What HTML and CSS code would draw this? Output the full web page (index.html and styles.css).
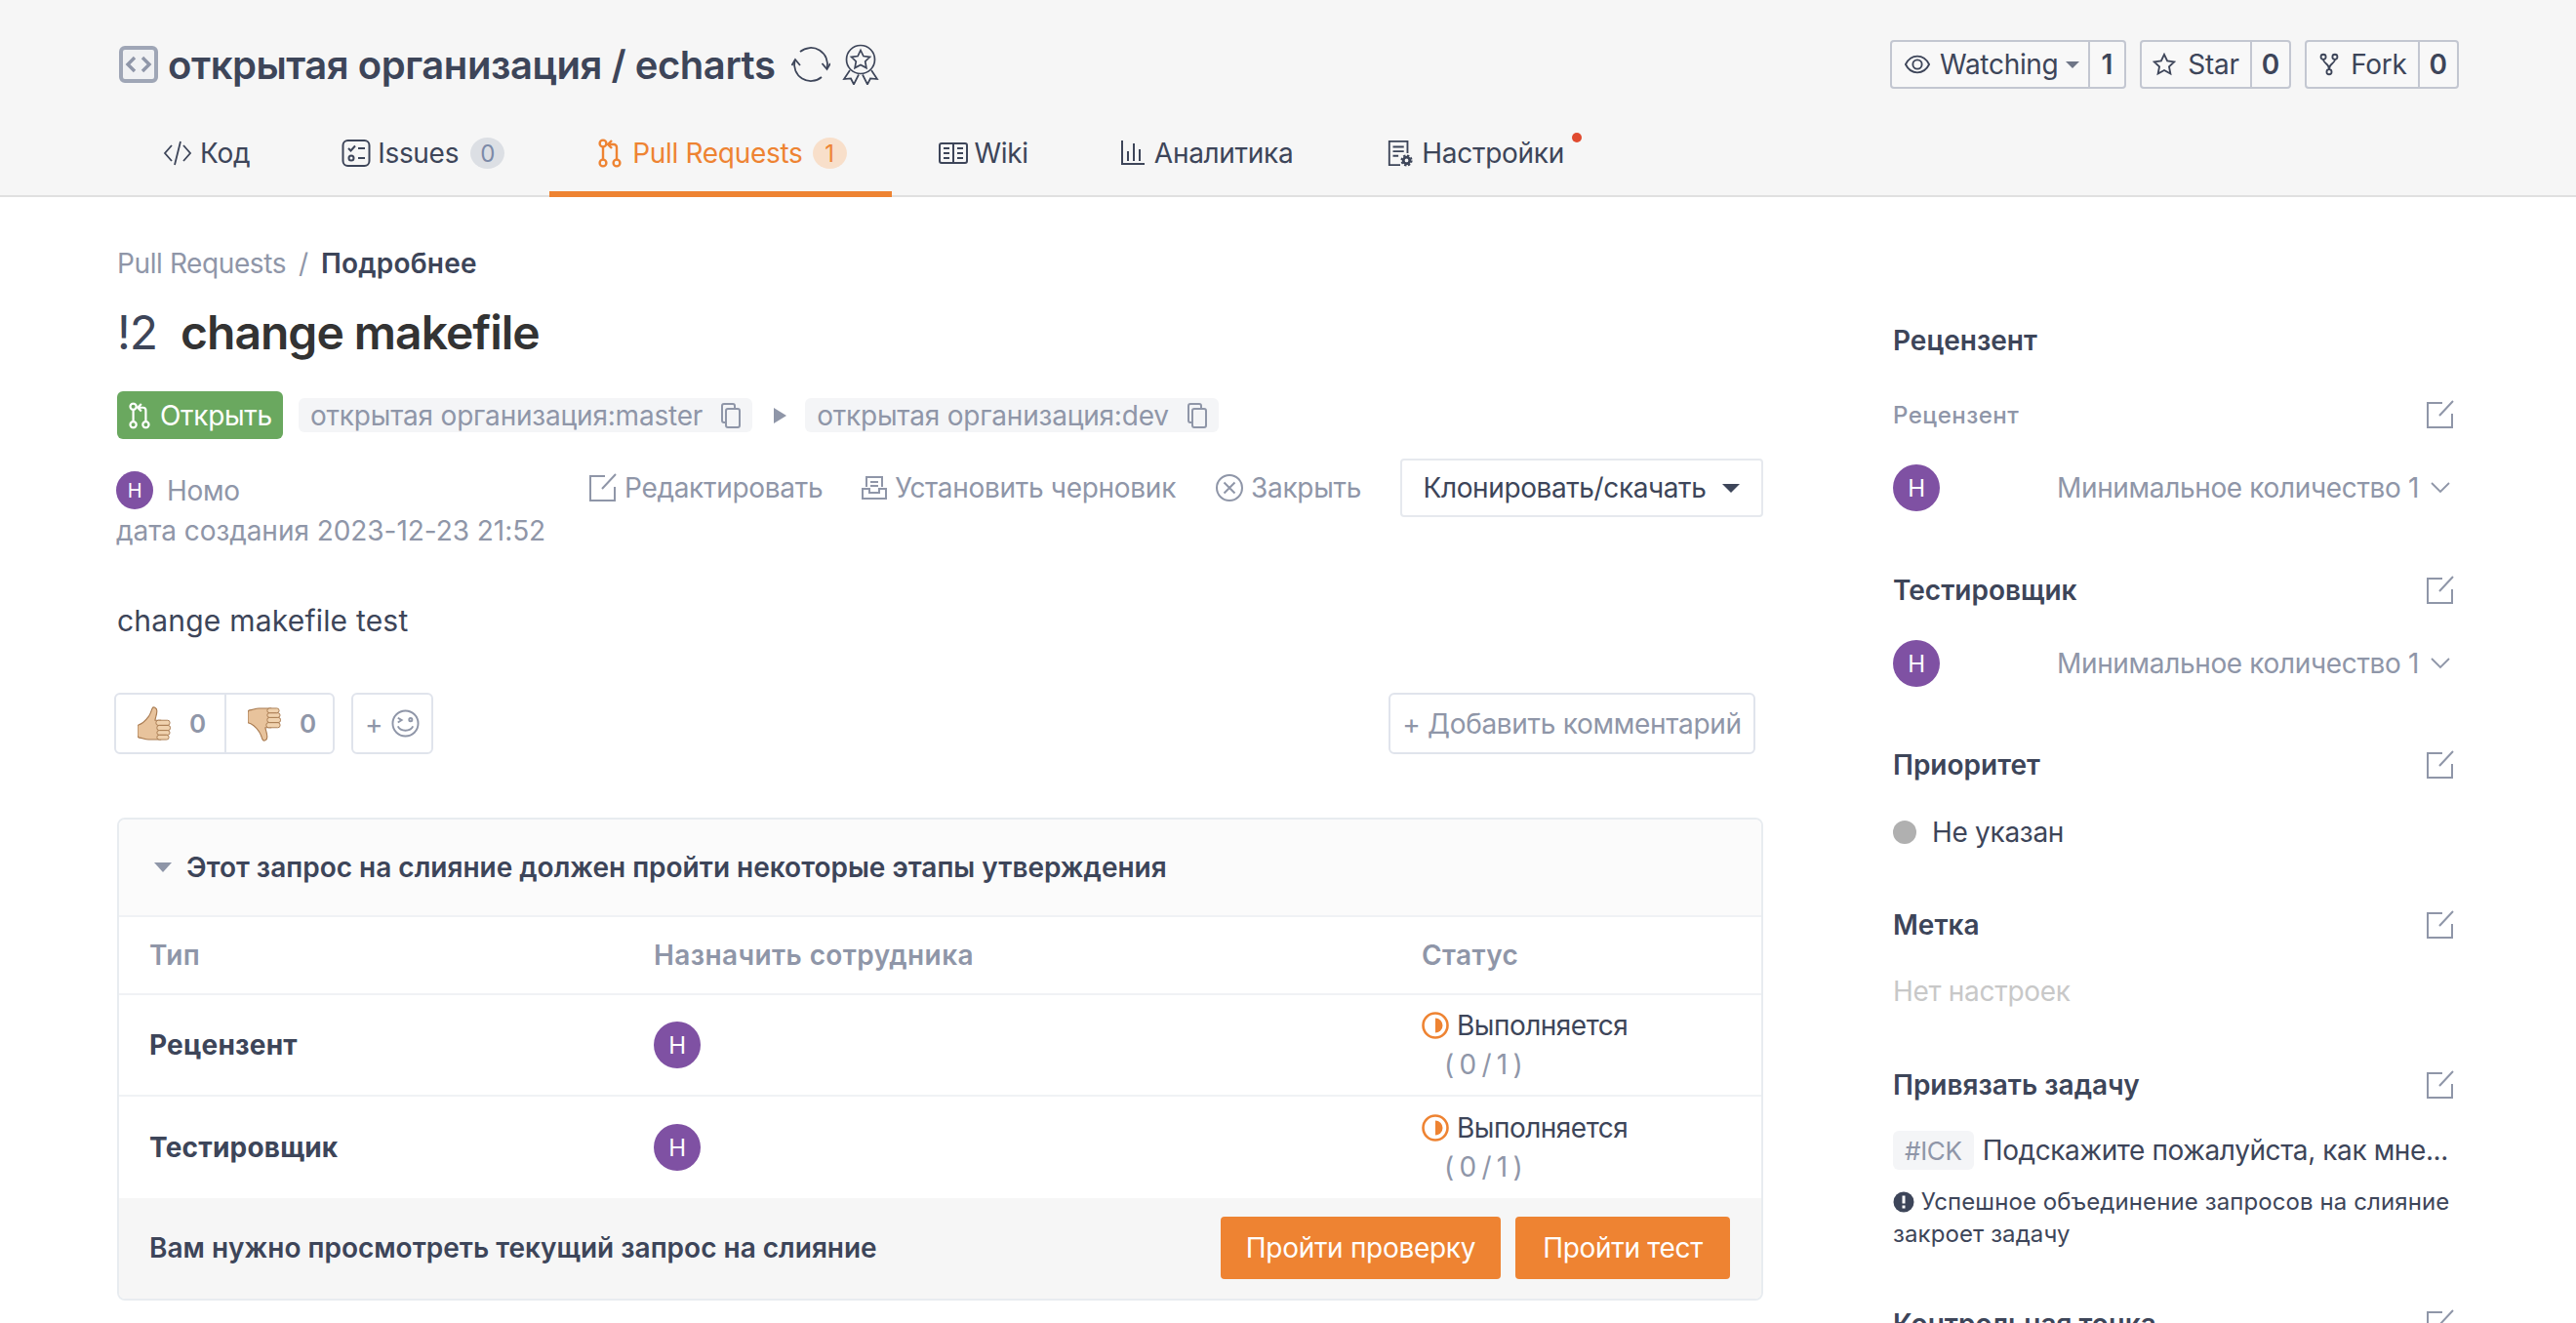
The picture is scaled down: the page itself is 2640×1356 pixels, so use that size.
FILE: index.html
```html
<!DOCTYPE html>
<html lang="ru">
<head>
  <meta charset="UTF-8">
  <title>change makefile</title>
  <link rel="stylesheet" href="styles.css">
</head>
<body>
  <svg class="defs" width="0" height="0">
    <symbol id="i-edit" viewBox="0 0 30 30">
      <path d="M17 3H2v25h25V14M14 16L28 1" fill="none" stroke="currentColor" stroke-width="2"/>
    </symbol>
    <symbol id="i-copy" viewBox="0 0 20 26">
      <rect x="5" y="6" width="14" height="19" rx="2" fill="none" stroke="currentColor" stroke-width="2"/>
      <path d="M5 20H3a2 2 0 0 1-2-2V3a2 2 0 0 1 2-2h9a2 2 0 0 1 2 2v3" fill="none" stroke="currentColor" stroke-width="2"/>
    </symbol>
    <symbol id="i-pr" viewBox="0 0 24 30">
      <g fill="none" stroke="currentColor" stroke-width="2.4">
        <circle cx="5" cy="5" r="3.4"/><circle cx="5" cy="25" r="3.4"/><circle cx="19" cy="25" r="3.4"/>
        <path d="M5 9v12M19 21V9a3 3 0 0 0-3-3h-5M14 2l-4 4 4 4"/>
      </g>
    </symbol>
    <symbol id="i-progress" viewBox="0 0 28 28">
      <circle cx="14" cy="14" r="12.5" fill="none" stroke="currentColor" stroke-width="2.6"/>
      <path d="M14 6.5a7.5 7.5 0 0 1 0 15z" fill="currentColor"/>
    </symbol>
    <symbol id="i-chevron" viewBox="0 0 20 12">
      <path d="M1 1l9 9 9-9" fill="none" stroke="currentColor" stroke-width="1.8"/>
    </symbol>
    <symbol id="i-thumb" viewBox="0 0 36 38">
      <path d="M1 20c4-1 8-5 11-9 2-3 3-6 4-9 1-2 5-1 5 3 0 4-2 8-2 10h6v21H12c-4 0-7-2-10-2-1 0-2-1-2-3v-9c0-1 0-2 1-2z" fill="#e8c39c" stroke="#a87a50" stroke-width="1.2"/>
      <rect x="20" y="15" width="15" height="5.5" rx="2.5" fill="#f0d2ae" stroke="#a87a50"/>
      <rect x="21" y="20.5" width="14.5" height="5.5" rx="2.5" fill="#f0d2ae" stroke="#a87a50"/>
      <rect x="21" y="26" width="14" height="5" rx="2.5" fill="#f0d2ae" stroke="#a87a50"/>
      <rect x="21" y="31" width="13" height="5" rx="2.5" fill="#f0d2ae" stroke="#a87a50"/>
    </symbol>
  </svg>

  <header class="repo-header">
    <div class="repo-top">
      <div class="repo-name">
        <svg class="repo-icon" viewBox="0 0 40 38"><rect x="2" y="2" width="36" height="34" rx="4" fill="#f0f1f3" stroke="#9fa6b6" stroke-width="4"/><path d="M16 12l-7 7 7 7M24 12l7 7-7 7" fill="none" stroke="#8f96a8" stroke-width="3.4"/></svg>
        <span>открытая организация / echarts</span>
        <svg class="sync-icon" viewBox="0 0 40 40"><g fill="none" stroke="#3d4559" stroke-width="1.800"><path d="M9 7A17 17 0 0 1 36.500 24"/><path d="M31.500 19l5 6 3.500-6"/><path d="M31 33A17 17 0 0 1 3.500 16"/><path d="M.5 21l3.500-6 5 6"/></g></svg>
        <svg class="medal-icon" viewBox="0 0 38 42"><g fill="none" stroke="#3d4559" stroke-width="1.7"><circle cx="19" cy="16" r="14.500"/><path d="M19 6.500l2.900 6 6.600.9-4.800 4.600 1.200 6.600-5.900-3.100-5.900 3.100 1.200-6.600-4.800-4.600 6.600-.9z"/><path d="M8 27L2 36l7-.5 3 6 5-10M30 27l6 9-7-.5-3 6-5-10"/></g></svg>
      </div>
      <div class="repo-actions">
        <div class="count-btn count-watch">
          <span class="count-label">
            <svg class="btn-icon" viewBox="0 0 28 22"><g fill="none" stroke="#3d4559" stroke-width="2"><path d="M1 11c3-6 8-9 13-9s10 3 13 9c-3 6-8 9-13 9S4 17 1 11z"/><circle cx="14" cy="11" r="5"/></g></svg>
            Watching<i class="caret"></i>
          </span>
          <b class="count-num">1</b>
        </div>
        <div class="count-btn count-star">
          <span class="count-label">
            <svg class="btn-icon btn-icon-star" viewBox="0 0 26 26"><path d="M13 2l3.400 7.200 7.600 1-5.600 5.300 1.500 7.800-6.900-3.800-6.900 3.800 1.500-7.800L2 10.200l7.600-1z" fill="none" stroke="#3d4559" stroke-width="2"/></svg>
            Star
          </span>
          <b class="count-num">0</b>
        </div>
        <div class="count-btn">
          <span class="count-label">
            <svg class="btn-icon btn-icon-fork" viewBox="0 0 22 26"><g fill="none" stroke="#3d4559" stroke-width="2"><circle cx="4.500" cy="4.500" r="2.800"/><circle cx="17.500" cy="4.500" r="2.800"/><circle cx="11" cy="21.500" r="2.800"/><path d="M4.500 7.500c0 5 6.500 4 6.500 11M17.500 7.500c0 5-6.500 4-6.500 11"/></g></svg>
            Fork
          </span>
          <b class="count-num">0</b>
        </div>
      </div>
    </div>
    <nav class="tabs">
      <a class="tab tab-code">
        <svg class="tab-icon tab-icon-code" viewBox="0 0 30 30"><path d="M9 7l-7 8 7 8M21 7l7 8-7 8M18 3l-6 24" fill="none" stroke="currentColor" stroke-width="1.800"/></svg>
        Код
      </a>
      <a class="tab tab-issues">
        <svg class="tab-icon" viewBox="0 0 30 30"><g fill="none" stroke="currentColor" stroke-width="2"><rect x="1.500" y="2" width="27" height="26" rx="5"/><path d="M7 10l2.500 2.500L14 7.500M17 10h7M17 20h7"/><circle cx="10" cy="20" r="2.500"/></g></svg>
        Issues
        <span class="tab-badge">0</span>
      </a>
      <a class="tab tab-active">
        <svg class="tab-icon tab-icon-pr" viewBox="0 0 24 30"><use href="#i-pr"/></svg>
        Pull Requests
        <span class="tab-badge">1</span>
      </a>
      <a class="tab tab-wiki">
        <svg class="tab-icon" viewBox="0 0 30 30"><g fill="none" stroke="currentColor" stroke-width="2"><rect x="1" y="5" width="28" height="20" rx="2"/><path d="M15 5v20M5 10h6M5 15h6M5 20h6M19 10h6M19 15h6M19 20h6"/></g></svg>
        Wiki
      </a>
      <a class="tab">
        <svg class="tab-icon tab-icon-stats" viewBox="0 0 26 30"><path d="M2 2v24h23M8 13v10M14 5v18M20 11v12" fill="none" stroke="currentColor" stroke-width="2"/></svg>
        Аналитика
      </a>
      <a class="tab tab-dot">
        <svg class="tab-icon tab-icon-settings" viewBox="0 0 30 30"><g fill="none" stroke="currentColor" stroke-width="2"><path d="M15 28H3V2h20v13M7 8h12M7 13h12M7 18h6"/><circle cx="22" cy="23" r="3.500" stroke-width="3"/><circle cx="22" cy="23" r="5.500" stroke-dasharray="2.500 1.800" stroke-width="2"/></g></svg>
        Настройки
      </a>
    </nav>
  </header>

  <main class="page">
    <section class="content">
      <div class="crumbs"><span class="crumb-link">Pull Requests</span><span class="crumb-sep">/</span><b>Подробнее</b></div>
      <h1 class="pr-title"><span class="pr-num">!2</span>change makefile</h1>

      <div class="status-row">
        <span class="state-open"><svg class="state-icon" viewBox="0 0 24 30"><use href="#i-pr"/></svg>Открыть</span>
        <span class="branch">открытая организация:master<svg class="copy-icon"><use href="#i-copy"/></svg></span>
        <i class="branch-arrow"></i>
        <span class="branch">открытая организация:dev<svg class="copy-icon"><use href="#i-copy"/></svg></span>
      </div>

      <div class="author-row">
        <div class="author">
          <div class="author-name"><span class="avatar avatar-sm">Н</span>Номо</div>
          <div class="author-date">дата создания 2023-12-23 21:52</div>
        </div>
        <div class="pr-actions">
          <span class="action"><svg class="action-icon"><use href="#i-edit"/></svg>Редактировать</span>
          <span class="action"><svg class="action-icon draft" viewBox="0 0 26 26"><g fill="none" stroke="currentColor" stroke-width="2"><path d="M5 12V2h16v10M1 14h7v4h10v-4h7v10H1zM9 7h8M9 11h8"/></g></svg>Установить черновик</span>
          <span class="action"><svg class="action-icon" viewBox="0 0 30 30"><g fill="none" stroke="currentColor" stroke-width="2"><circle cx="15" cy="15" r="13"/><path d="M9.500 9.500l11 11M20.500 9.500l-11 11"/></g></svg>Закрыть</span>
          <button class="clone-btn">Клонировать/скачать<i class="caret caret-dark"></i></button>
        </div>
      </div>

      <p class="pr-desc">change makefile test</p>

      <div class="reaction-row">
        <div class="reactions">
          <span class="reaction"><svg class="thumb"><use href="#i-thumb"/></svg><b>0</b></span>
          <span class="reaction"><svg class="thumb thumb-down"><use href="#i-thumb"/></svg><b>0</b></span>
        </div>
        <span class="add-reaction">+<svg class="smile" viewBox="0 0 30 30"><g fill="none" stroke="currentColor" stroke-width="2"><circle cx="15" cy="15" r="13.500"/><path d="M7 9l4 2.500L7 14M7 18c3 6 13 6 16 0"/><circle cx="20.500" cy="11" r="1.600"/></g></svg></span>
        <button class="add-comment">+ Добавить комментарий</button>
      </div>

      <div class="review-panel">
        <div class="panel-head"><i class="panel-caret"></i>Этот запрос на слияние должен пройти некоторые этапы утверждения</div>
        <div class="panel-row panel-labels">
          <span>Тип</span><span>Назначить сотрудника</span><span>Статус</span>
        </div>
        <div class="panel-row panel-item">
          <b>Рецензент</b>
          <span><span class="avatar">Н</span></span>
          <div>
            <div class="progress"><svg class="progress-icon"><use href="#i-progress"/></svg>Выполняется</div>
            <div class="progress-count">( 0 / 1 )</div>
          </div>
        </div>
        <div class="panel-row panel-item">
          <b>Тестировщик</b>
          <span><span class="avatar">Н</span></span>
          <div>
            <div class="progress"><svg class="progress-icon"><use href="#i-progress"/></svg>Выполняется</div>
            <div class="progress-count">( 0 / 1 )</div>
          </div>
        </div>
        <div class="panel-foot">
          <b>Вам нужно просмотреть текущий запрос на слияние</b>
          <div class="foot-btns">
            <button class="orange-btn">Пройти проверку</button>
            <button class="orange-btn">Пройти тест</button>
          </div>
        </div>
      </div>
    </section>

    <aside class="side">
      <h3 class="side-head">Рецензент</h3>
      <div class="side-sub"><span>Рецензент</span><svg class="edit-icon"><use href="#i-edit"/></svg></div>
      <div class="side-person side-section">
        <span class="avatar">Н</span>
        <span class="min-count">Минимальное количество 1<svg class="chevron"><use href="#i-chevron"/></svg></span>
      </div>

      <h3 class="side-head">Тестировщик<svg class="edit-icon"><use href="#i-edit"/></svg></h3>
      <div class="side-person side-section side-next">
        <span class="avatar">Н</span>
        <span class="min-count">Минимальное количество 1<svg class="chevron"><use href="#i-chevron"/></svg></span>
      </div>

      <h3 class="side-head">Приоритет<svg class="edit-icon"><use href="#i-edit"/></svg></h3>
      <div class="side-value side-section"><i class="dot"></i>Не указан</div>

      <h3 class="side-head">Метка<svg class="edit-icon"><use href="#i-edit"/></svg></h3>
      <div class="side-value side-empty side-section">Нет настроек</div>

      <h3 class="side-head">Привязать задачу<svg class="edit-icon"><use href="#i-edit"/></svg></h3>
      <div class="issue-link"><span class="issue-id">#ICK</span><span class="issue-title">Подскажите пожалуйста, как мне...</span></div>
      <p class="issue-note side-section"><svg class="note-icon" viewBox="0 0 22 22"><circle cx="11" cy="11" r="10.500" fill="#3d4559"/><rect x="9.500" y="4.500" width="3" height="8" fill="#fff"/><rect x="9.500" y="14.500" width="3" height="3" fill="#fff"/></svg> Успешное объединение запросов на слияние закроет задачу</p>

      <h3 class="side-head">Контрольная точка<svg class="edit-icon"><use href="#i-edit"/></svg></h3>
    </aside>
  </main>
</body>
</html>
```

FILE: styles.css
```css
* { box-sizing: border-box; }
html, body { height: 100%; }
body { margin: 0; overflow: hidden; background: #fff; color: #3d4559; font-family: Inter, "Noto Sans", sans-serif; font-size: 28px; letter-spacing: -0.3px; }
.defs { position: absolute; }
button { font-family: inherit; letter-spacing: inherit; cursor: pointer; }
b { font-weight: 600; letter-spacing: 0; }

/* header */
.repo-header { height: 202px; background: #f6f6f6; border-bottom: 2px solid #e0e0e0; padding: 0 120px; }
.repo-top { height: 132px; display: flex; align-items: center; justify-content: space-between; }
.repo-name { display: flex; align-items: center; margin-left: 2px; font-size: 40px; font-weight: 600; letter-spacing: -0.45px; }
.repo-icon { width: 40px; height: 38px; margin-right: 10px; }
.sync-icon { width: 40px; height: 40px; margin-left: 17px; }
.medal-icon { width: 38px; height: 42px; margin-left: 12px; }
.repo-actions { display: flex; gap: 14px; }
.count-btn { display: flex; height: 50px; border: 2px solid #c3c7d1; border-radius: 4px; background: #f8f8f8; }
.count-label { display: flex; align-items: center; padding: 0 11px 0 13px; border-right: 2px solid #c3c7d1; }
.count-watch .count-label { padding-right: 9px; }
.count-watch .count-num { padding: 0 12px; }
.count-star .count-label { padding-left: 11px; }
.btn-icon { width: 26px; height: 24px; margin-right: 10px; }
.btn-icon-star { width: 24px; margin-right: 12px; }
.btn-icon-fork { width: 20px; margin-right: 12px; }
.count-num { display: flex; align-items: center; padding: 0 10px; }
.caret { width: 0; height: 0; margin-left: 7px; border-left: 7px solid transparent; border-right: 7px solid transparent; border-top: 7px solid #6f7687; }
.tabs { display: flex; height: 70px; margin-left: -1px; }
.tab { display: flex; align-items: center; height: 70px; padding: 0 48px 14px; border-bottom: 6px solid transparent; color: #3d4559; }
.tab-code, .tab-issues, .tab-wiki { padding-right: 46px; }
.tab-icon { width: 30px; height: 30px; margin-right: 7px; }
.tab-icon-code { margin-right: 8px; }
.tab-icon-pr { width: 24px; margin-right: 11px; }
.tab-icon-stats { width: 26px; margin-right: 9px; }
.tab-icon-settings { width: 28px; margin-right: 8px; }
.tab-badge { display: flex; align-items: center; justify-content: center; width: 35px; height: 32px; margin-left: 12px; border-radius: 50%; background: #dcdfe4; color: #7c8aa8; font-size: 24px; }
.tab-active { padding-left: 50px; padding-right: 46px; color: #ee8332; border-bottom-color: #ee8332; }
.tab-active .tab-badge { margin-left: 10px; background: #f8dfca; color: #ee8332; }
.tab-dot { position: relative; }
.tab-dot::after { content: ""; position: absolute; top: 4px; right: 30px; width: 10px; height: 10px; border-radius: 50%; background: #e04a2f; }

/* layout */
.page { display: flex; justify-content: space-between; padding: 0 120px; }
.content { width: 1687px; padding-top: 48px; }
.side { width: 580px; padding-top: 127px; }

/* title area */
.crumbs { height: 40px; line-height: 40px; color: #8f96a8; }
.crumb-link { letter-spacing: -0.4px; }
.crumb-sep { margin: 0 13px; }
.crumbs b { color: #3d4559; letter-spacing: 0.2px; }
.pr-title { height: 72px; line-height: 72px; margin: 15px 0 0; font-size: 48px; font-weight: 600; letter-spacing: -1px; color: #333; }
.pr-num { margin-right: 24px; font-weight: 400; color: #3d4559; }
.status-row { display: flex; align-items: center; height: 49px; margin-top: 24px; }
.state-open { display: flex; align-items: center; width: 170px; height: 49px; padding-left: 12px; border-radius: 6px; background: #6aa85f; color: #fff; }
.state-icon { width: 22px; height: 28px; margin-right: 10px; }
.branch { display: flex; align-items: center; height: 35px; margin-left: 16px; padding: 0 12px; border-radius: 6px; background: #f4f5f7; color: #8f96a8; letter-spacing: -0.2px; }
.copy-icon { width: 20px; height: 26px; margin-left: 19px; }
.branch-arrow { width: 0; height: 0; margin: 0 3px 0 22px; border-top: 8px solid transparent; border-bottom: 8px solid transparent; border-left: 13px solid #8f96a8; }
.author-row { display: flex; justify-content: space-between; height: 96px; margin-top: 20px; }
.author { margin-left: -1px; padding-top: 13px; color: #8f96a8; }
.author-name { display: flex; align-items: center; height: 39px; }
.author-date { height: 44px; line-height: 44px; letter-spacing: -0.05px; }
.pr-actions { display: flex; align-items: center; height: 60px; color: #8f96a8; }
.action { display: flex; align-items: center; margin-right: 40px; }
.action-icon { width: 30px; height: 30px; margin-right: 7px; }
.draft { width: 26px; height: 26px; margin-right: 8px; }
.clone-btn { display: flex; align-items: center; justify-content: center; width: 372px; height: 60px; background: #fff; border: 2px solid #e6e9ee; border-radius: 4px; color: #3d4559; font-size: 28px; letter-spacing: -0.4px; }
.caret-dark { margin-left: 17px; border-left-width: 9px; border-right-width: 9px; border-top-width: 9px; border-top-color: #3d4559; }
.pr-desc { height: 48px; line-height: 48px; margin: 46px 0 0; font-size: 30px; letter-spacing: 0.2px; }

/* reactions */
.reaction-row { display: flex; align-items: stretch; height: 63px; margin-top: 50px; margin-left: -3px; }
.reactions { display: flex; border: 2px solid #e0e4ec; border-radius: 6px; }
.reaction { display: flex; align-items: center; width: 111px; padding-left: 22px; color: #8f96a8; }
.reaction + .reaction { width: 111px; border-left: 2px solid #e0e4ec; }
.reaction b { margin-left: 19px; font-size: 26px; }
.thumb { width: 34px; height: 36px; }
.thumb-down { transform: scaleY(-1); }
.add-reaction { display: flex; align-items: center; justify-content: center; gap: 9px; width: 84px; margin-left: 17px; border: 2px solid #e0e4ec; border-radius: 6px; color: #8f96a8; }
.smile { width: 29px; height: 29px; }
.add-comment { width: 376px; margin-left: auto; margin-right: 8px; padding: 0; background: #fff; border: 2px solid #e0e4ec; border-radius: 6px; color: #8f96a8; font-size: 28px; }

/* review panel */
.review-panel { height: 495px; margin-top: 65px; border: 2px solid #e8ecf0; border-radius: 8px; overflow: hidden; }
.panel-head { display: flex; align-items: center; height: 100px; padding-left: 36px; border-bottom: 2px solid #f0f2f5; background: #fbfbfb; font-weight: 600; letter-spacing: 0; }
.panel-caret { width: 0; height: 0; margin-right: 15px; border-left: 9px solid transparent; border-right: 9px solid transparent; border-top: 10px solid #8f96a8; }
.panel-row { display: grid; grid-template-columns: 517px 787px 1fr; align-items: center; padding-left: 31px; border-bottom: 2px solid #f0f2f5; }
.panel-labels { height: 80px; color: #8f96a8; font-weight: 600; letter-spacing: 0.4px; }
.panel-item { height: 104px; }
.panel-item b { font-weight: 700; letter-spacing: 0.2px; }
.panel-item:nth-child(4) { border-bottom: 0; }
.progress { display: flex; align-items: center; height: 34px; letter-spacing: -0.5px; }
.progress-icon { width: 28px; height: 28px; margin-right: 8px; color: #ee8332; }
.progress-count { margin: 6px 0 0 23px; color: #8f96a8; line-height: 34px; word-spacing: -2px; }
.panel-foot { display: flex; align-items: center; justify-content: space-between; height: 103px; padding: 0 32px 2px 31px; background: #f6f6f6; }
.foot-btns { display: flex; gap: 15px; }
.orange-btn { height: 64px; padding: 0 26px; background: #ee8332; border: 0; border-radius: 4px; color: #fff; font-size: 28px; }
.orange-btn:last-child { padding: 0 28px; }
.avatar { display: inline-flex; align-items: center; justify-content: center; width: 48px; height: 48px; border-radius: 50%; background: #7f51a3; color: #fff; font-size: 24px; }
.avatar-sm { width: 38px; height: 39px; margin-right: 14px; font-size: 20px; }

/* sidebar */
.side-head { display: flex; align-items: center; justify-content: space-between; height: 40px; margin: 0; font-size: 28px; font-weight: 600; letter-spacing: 0; }
.side-sub { display: flex; align-items: center; justify-content: space-between; height: 40px; margin-top: 36px; color: #8f96a8; font-size: 24px; font-weight: 500; letter-spacing: 0.5px; }
.edit-icon { width: 30px; height: 30px; margin-right: 4px; color: #8f96a8; }
.side-person { display: flex; align-items: center; justify-content: space-between; height: 48px; margin-top: 31px; }
.side-section { margin-bottom: 61px; }
.side-next { margin-bottom: 60px; }
.min-count { display: flex; align-items: center; color: #8f96a8; letter-spacing: -0.35px; }
.chevron { width: 20px; height: 12px; margin: 0 9px 0 12px; }
.side-value { display: flex; align-items: center; height: 40px; margin-top: 29px; margin-bottom: 55px; }
.side-empty { margin-top: 28px; margin-bottom: 56px; color: #c8c8c8; }
.dot { width: 24px; height: 24px; margin-right: 16px; border-radius: 50%; background: #b0b0b0; }
.issue-link { display: flex; align-items: center; height: 40px; margin-top: 27px; }
.issue-id { display: flex; align-items: center; height: 40px; padding: 0 12px; border-radius: 6px; background: #f4f5f7; color: #8f96a8; font-size: 26px; }
.issue-title { margin-left: 9px; white-space: nowrap; letter-spacing: -0.4px; }
.issue-note { margin-top: 16px; margin-bottom: 56px; font-size: 24px; line-height: 33px; letter-spacing: 0.1px; }
.note-icon { width: 22px; height: 22px; vertical-align: -3px; }
```
